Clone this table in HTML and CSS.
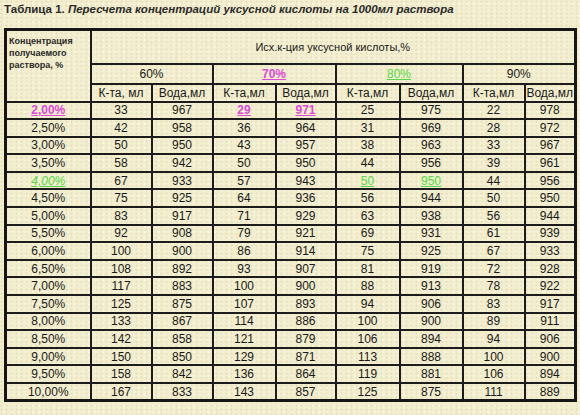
FILE: index.html
```html
<!DOCTYPE html>
<html lang="ru">
<head>
<meta charset="utf-8">
<title>Таблица 1</title>
<link rel="stylesheet" href="styles.css">
</head>
<body>
<div class="title"><b>Таблица 1.</b> <i>Пересчета концентраций уксусной кислоты на 1000мл раствора</i></div>
<table class="grid">
<colgroup>
<col class="c1"><col class="c2"><col class="c3"><col class="c4"><col class="c5"><col class="c6"><col class="c7"><col class="c8"><col class="c9">
</colgroup>
<thead>
<tr class="h1">
<th rowspan="3" class="corner">Концентрация<br>получаемого<br>раствора, %</th>
<th colspan="8" class="main">Исх.к-ция уксусной кислоты,%</th>
</tr>
<tr class="h2">
<th colspan="2">60%</th>
<th colspan="2"><span class="mag">70%</span></th>
<th colspan="2"><span class="grn">80%</span></th>
<th colspan="2">90%</th>
</tr>
<tr class="h3">
<th>К-та, мл</th><th>Вода,мл</th>
<th>К-та,мл</th><th>Вода,мл</th>
<th>К-та,мл</th><th>Вода,мл</th>
<th>К-та,мл</th><th>Вода,мл</th>
</tr>
</thead>
<tbody>
<tr><td><span class="mag">2,00%</span></td><td>33</td><td>967</td><td><span class="mag">29</span></td><td><span class="mag">971</span></td><td>25</td><td>975</td><td>22</td><td>978</td></tr>
<tr><td>2,50%</td><td>42</td><td>958</td><td>36</td><td>964</td><td>31</td><td>969</td><td>28</td><td>972</td></tr>
<tr><td>3,00%</td><td>50</td><td>950</td><td>43</td><td>957</td><td>38</td><td>963</td><td>33</td><td>967</td></tr>
<tr><td>3,50%</td><td>58</td><td>942</td><td>50</td><td>950</td><td>44</td><td>956</td><td>39</td><td>961</td></tr>
<tr><td><span class="grn it">4,00%</span></td><td>67</td><td>933</td><td>57</td><td>943</td><td><span class="grn">50</span></td><td><span class="grn">950</span></td><td>44</td><td>956</td></tr>
<tr><td>4,50%</td><td>75</td><td>925</td><td>64</td><td>936</td><td>56</td><td>944</td><td>50</td><td>950</td></tr>
<tr><td>5,00%</td><td>83</td><td>917</td><td>71</td><td>929</td><td>63</td><td>938</td><td>56</td><td>944</td></tr>
<tr><td>5,50%</td><td>92</td><td>908</td><td>79</td><td>921</td><td>69</td><td>931</td><td>61</td><td>939</td></tr>
<tr><td>6,00%</td><td>100</td><td>900</td><td>86</td><td>914</td><td>75</td><td>925</td><td>67</td><td>933</td></tr>
<tr><td>6,50%</td><td>108</td><td>892</td><td>93</td><td>907</td><td>81</td><td>919</td><td>72</td><td>928</td></tr>
<tr><td>7,00%</td><td>117</td><td>883</td><td>100</td><td>900</td><td>88</td><td>913</td><td>78</td><td>922</td></tr>
<tr><td>7,50%</td><td>125</td><td>875</td><td>107</td><td>893</td><td>94</td><td>906</td><td>83</td><td>917</td></tr>
<tr><td>8,00%</td><td>133</td><td>867</td><td>114</td><td>886</td><td>100</td><td>900</td><td>89</td><td>911</td></tr>
<tr><td>8,50%</td><td>142</td><td>858</td><td>121</td><td>879</td><td>106</td><td>894</td><td>94</td><td>906</td></tr>
<tr><td>9,00%</td><td>150</td><td>850</td><td>129</td><td>871</td><td>113</td><td>888</td><td>100</td><td>900</td></tr>
<tr><td>9,50%</td><td>158</td><td>842</td><td>136</td><td>864</td><td>119</td><td>881</td><td>106</td><td>894</td></tr>
<tr><td>10,00%</td><td>167</td><td>833</td><td>143</td><td>857</td><td>125</td><td>875</td><td>111</td><td>889</td></tr>
</tbody>
</table>
</body>
</html>
```
FILE: styles.css
```css
html, body {
  margin: 0;
  padding: 0;
}
body {
  width: 580px;
  height: 415px;
  overflow: hidden;
  background-color: #f2eecf;
  background-image:
    radial-gradient(circle at 30% 40%, rgba(190, 180, 120, 0.22) 0.8px, transparent 1.4px),
    radial-gradient(circle at 70% 70%, rgba(255, 255, 240, 0.55) 0.8px, transparent 1.4px);
  background-size: 5px 4px, 7px 6px;
  font-family: "Liberation Sans", Arial, sans-serif;
  color: #1a1a1a;
}
.title {
  padding: 3px 0 0 4px;
  height: 22px;
  font-size: 11.5px;
  line-height: 13px;
  font-weight: bold;
  color: #2a2a2a;
}
.title b {
  font-weight: bold;
}
.title i {
  font-style: italic;
}
.grid {
  margin: 3px 0 0 4px;
  width: 572px;
  table-layout: fixed;
  border-collapse: collapse;
  border: 3px solid #161616;
  font-size: 12px;
}
.c1 { width: 85px; }
.c2 { width: 61px; }
.c3 { width: 61px; }
.c4 { width: 63px; }
.c5 { width: 60px; }
.c6 { width: 64px; }
.c7 { width: 63px; }
.c8 { width: 62px; }
.c9 { width: 51px; }
.grid th,
.grid td {
  border: 2px solid #1c1c1c;
  padding: 0;
  text-align: center;
  vertical-align: middle;
  font-weight: normal;
  line-height: 14px;
  white-space: nowrap;
  overflow: hidden;
}
.h1 { height: 34px; }
.h2 { height: 20px; }
.h3 { height: 18px; }
.grid tbody tr { height: 17.6px; }
.grid th.corner {
  text-align: left;
  vertical-align: top;
  font-size: 9px;
  line-height: 12px;
  font-weight: bold;
  padding: 4px 0 0 2px;
  color: #2a2a2a;
}
.grid th.main {
  font-size: 11px;
  padding-top: 0;
}
.mag {
  color: #d94ad6;
  font-weight: bold;
  text-decoration: underline;
}
.grn {
  color: #55d848;
  text-decoration: underline;
}
.it {
  font-style: italic;
}
```
